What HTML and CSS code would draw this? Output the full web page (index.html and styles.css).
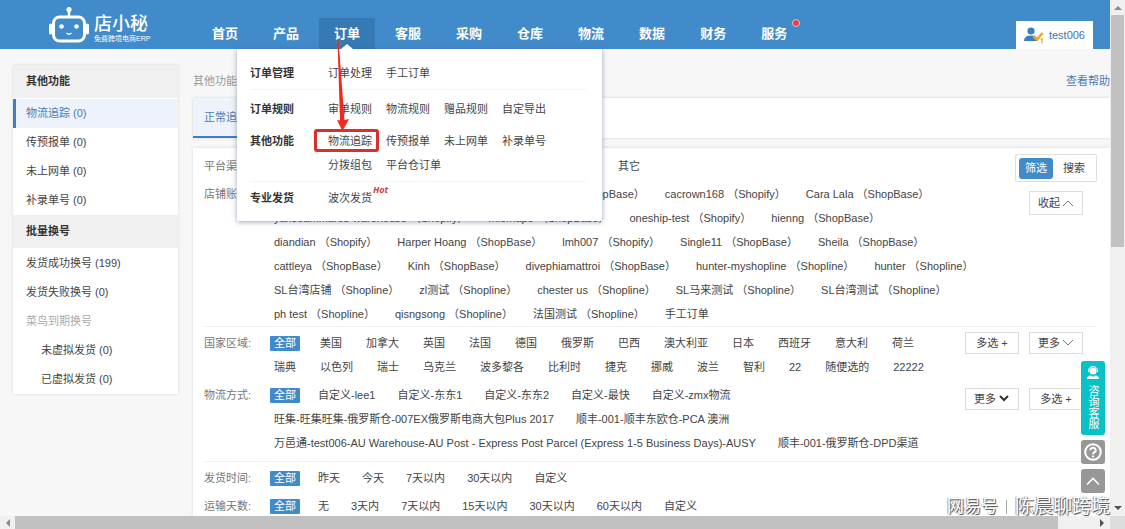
FILE: index.html
```html
<!DOCTYPE html>
<html lang="zh-CN">
<head>
<meta charset="utf-8">
<title>店小秘 - 物流追踪</title>
<link rel="stylesheet" href="styles.css">
</head>
<body>
<div class="page">
  <div class="view">
    <header class="header">
      <a class="logo" href="#">
        <svg class="logo-icon" viewBox="0 0 40 37" fill="none" stroke="#fff">
          <rect x="4.500" y="11" width="31" height="24" rx="6" stroke-width="3"/>
          <path d="M20 11V5" stroke-width="2.500"/>
          <circle cx="20" cy="3.500" r="2.600" fill="#fff" stroke="none"/>
          <path d="M1.500 19v8M38.500 19v8" stroke-width="3" stroke-linecap="round"/>
          <circle cx="12.500" cy="20.500" r="2.300" fill="#fff" stroke="none"/>
          <circle cx="27.500" cy="20.500" r="2.300" fill="#fff" stroke="none"/>
          <path d="M17.500 27q2.500 2.400 5 0" stroke-width="1.400"/>
        </svg>
        <span class="logo-text">
          <span class="logo-name">店小秘</span>
          <span class="logo-sub">免费跨境电商ERP</span>
        </span>
      </a>
      <nav class="nav">
        <div class="nav-item"><a href="#">首页</a></div>
        <div class="nav-item"><a href="#">产品</a></div>
        <div class="nav-item nav-item--active"><a href="#">订单</a>
          <div class="menu">
            <div class="menu-row">
              <strong>订单管理</strong>
              <div class="menu-links"><a href="#">订单处理</a><a href="#">手工订单</a></div>
            </div>
            <div class="menu-row menu-row--line">
              <strong>订单规则</strong>
              <div class="menu-links"><a href="#">审单规则</a><a href="#">物流规则</a><a href="#">赠品规则</a><a href="#">自定导出</a></div>
            </div>
            <div class="menu-row">
              <strong>其他功能</strong>
              <div class="menu-links"><a class="marked" href="#">物流追踪</a><a href="#">传预报单</a><a href="#">未上网单</a><a href="#">补录单号</a><a href="#">分拨组包</a><a href="#">平台仓订单</a></div>
            </div>
            <div class="menu-row menu-row--line">
              <strong>专业发货</strong>
              <div class="menu-links"><a class="hot-link" href="#">波次发货<em class="hot">Hot</em></a></div>
            </div>
            <svg class="arrow" viewBox="0 0 16 90"><path d="M5.500 0L6.500 0L12.500 80L17 79L10.500 91L5 80L8 80.500Z" fill="#f0281e"/></svg>
          </div>
        </div>
        <div class="nav-item"><a href="#">客服</a></div>
        <div class="nav-item"><a href="#">采购</a></div>
        <div class="nav-item"><a href="#">仓库</a></div>
        <div class="nav-item"><a href="#">物流</a></div>
        <div class="nav-item"><a href="#">数据</a></div>
        <div class="nav-item"><a href="#">财务</a></div>
        <div class="nav-item nav-item--dot"><a href="#">服务</a></div>
      </nav>
      <a class="user" href="#">
        <svg class="user-icon" viewBox="0 0 20 17">
          <circle cx="7" cy="4" r="3.600" fill="#3a7fc0"/>
          <path d="M0 14q0-5.500 7-5.500t7 5.500z" fill="#3a7fc0"/>
          <path d="M9.500 9l3.500 3.500L18.500 6" fill="none" stroke="#eda829" stroke-width="2.600"/>
          <path d="M16.500 12.500l1.500-1v5" fill="none" stroke="#eda829" stroke-width="1.200"/>
        </svg>
        <span>test006</span>
      </a>
    </header>

    <div class="body">
      <aside class="sidebar">
        <h2>其他功能</h2>
        <ul>
          <li><a class="active" href="#">物流追踪 (0)</a></li>
          <li><a href="#">传预报单 (0)</a></li>
          <li><a href="#">未上网单 (0)</a></li>
          <li><a href="#">补录单号 (0)</a></li>
        </ul>
        <h2>批量换号</h2>
        <ul>
          <li><a href="#">发货成功换号 (199)</a></li>
          <li><a href="#">发货失败换号 (0)</a></li>
          <li><span class="muted">菜鸟到期换号</span></li>
          <li><a class="sub" href="#">未虚拟发货 (0)</a></li>
          <li><a class="sub" href="#">已虚拟发货 (0)</a></li>
        </ul>
      </aside>

      <main class="main">
        <div class="crumb"><span>其他功能</span><a href="#">查看帮助</a></div>
        <div class="tabs"><a class="tab" href="#">正常追踪</a></div>
        <section class="panel">
          <div class="group">
            <div class="label">平台渠道:</div>
            <div class="options">
              <div class="line line--platform"><a href="#">其它</a></div>
            </div>
            <div class="switch"><button class="primary">筛选</button><button>搜索</button></div>
          </div>
          <div class="group group--shops">
            <div class="label">店铺账号:</div>
            <div class="options">
              <div class="line line--shop"><a href="#">（ShopBase）</a><a href="#">cacrown168 （Shopify）</a><a href="#">Cara Lala （ShopBase）</a></div>
              <div class="line"><a href="#">yanseammares-warehouse （Shopify）</a><a href="#">miemape （ShopBase）</a><a href="#">oneship-test （Shopify）</a><a href="#">hienng （ShopBase）</a></div>
              <div class="line"><a href="#">diandian （Shopify）</a><a href="#">Harper Hoang （ShopBase）</a><a href="#">lmh007 （Shopify）</a><a href="#">Single11 （ShopBase）</a><a href="#">Sheila （ShopBase）</a></div>
              <div class="line"><a href="#">cattleya （ShopBase）</a><a href="#">Kinh （ShopBase）</a><a href="#">divephiamattroi （ShopBase）</a><a href="#">hunter-myshopline （Shopline）</a><a href="#">hunter （Shopline）</a></div>
              <div class="line"><a href="#">SL台湾店铺 （Shopline）</a><a href="#">zl测试 （Shopline）</a><a href="#">chester us （Shopline）</a><a href="#">SL马来测试 （Shopline）</a><a href="#">SL台湾测试 （Shopline）</a></div>
              <div class="line"><a href="#">ph test （Shopline）</a><a href="#">qisngsong （Shopline）</a><a href="#">法国测试 （Shopline）</a><a href="#">手工订单</a></div>
            </div>
            <div class="tools tools--shops"><button>收起<svg viewBox="0 0 12 8"><path d="M1 7l5-5 5 5"/></svg></button></div>
          </div>
          <div class="group group--line">
            <div class="label">国家区域:</div>
            <div class="options options--region">
              <div class="line"><a class="on" href="#">全部</a><a href="#">美国</a><a href="#">加拿大</a><a href="#">英国</a><a href="#">法国</a><a href="#">德国</a><a href="#">俄罗斯</a><a href="#">巴西</a><a href="#">澳大利亚</a><a href="#">日本</a><a href="#">西班牙</a><a href="#">意大利</a><a href="#">荷兰</a></div>
              <div class="line"><a href="#">瑞典</a><a href="#">以色列</a><a href="#">瑞士</a><a href="#">乌克兰</a><a href="#">波多黎各</a><a href="#">比利时</a><a href="#">捷克</a><a href="#">挪威</a><a href="#">波兰</a><a href="#">智利</a><a href="#">22</a><a href="#">随便选的</a><a href="#">22222</a></div>
            </div>
            <div class="tools"><button>多选 +</button><button>更多<svg viewBox="0 0 12 8"><path d="M1 1l5 5 5-5"/></svg></button></div>
          </div>
          <div class="group group--logistics">
            <div class="label">物流方式:</div>
            <div class="options">
              <div class="line"><a class="on" href="#">全部</a><a href="#">自定义-lee1</a><a href="#">自定义-东东1</a><a href="#">自定义-东东2</a><a href="#">自定义-最快</a><a href="#">自定义-zmx物流</a></div>
              <div class="line"><a href="#">旺集-旺集旺集-俄罗斯仓-007EX俄罗斯电商大包Plus 2017</a><a href="#">顺丰-001-顺丰东欧仓-PCA 澳洲</a></div>
              <div class="line"><a href="#">万邑通-test006-AU Warehouse-AU Post - Express Post Parcel (Express 1-5 Business Days)-AUSY</a><a href="#">顺丰-001-俄罗斯仓-DPD渠道</a></div>
            </div>
            <div class="tools tools--logistics"><button>更多<svg class="bold" viewBox="0 0 12 8"><path d="M2 1l4 4 4-4"/></svg></button><button>多选 +</button></div>
          </div>
          <div class="group group--line">
            <div class="label">发货时间:</div>
            <div class="options">
              <div class="line"><a class="on" href="#">全部</a><a href="#">昨天</a><a href="#">今天</a><a href="#">7天以内</a><a href="#">30天以内</a><a href="#">自定义</a></div>
            </div>
          </div>
          <div class="group">
            <div class="label">运输天数:</div>
            <div class="options">
              <div class="line"><a class="on" href="#">全部</a><a href="#">无</a><a href="#">3天内</a><a href="#">7天以内</a><a href="#">15天以内</a><a href="#">30天以内</a><a href="#">60天以内</a><a href="#">自定义</a></div>
            </div>
          </div>
        </section>
      </main>
    </div>

    <div class="float">
      <button class="service">
        <svg viewBox="0 0 14 14" fill="#fff"><circle cx="7" cy="5" r="3.600"/><path d="M1 13q0-3.500 4-3.500l2 1.500 2-1.500q4 0 4 3.500z"/><path d="M2.500 6V4.500a4.500 4 0 0 1 9 0V6" fill="none" stroke="#fff"/></svg>
        <span>咨询客服</span>
      </button>
      <button class="square" aria-label="帮助">
        <svg viewBox="0 0 20 20" fill="none" stroke="#fff" stroke-width="2"><circle cx="10" cy="10" r="7.800"/><path d="M7.300 8.200a2.700 2.500 0 1 1 4.300 2q-1.600 1-1.600 2"/><path d="M10 13.500v1.800"/></svg>
      </button>
      <button class="square" aria-label="返回顶部">
        <svg viewBox="0 0 20 20" fill="none" stroke="#fff" stroke-width="1.600"><path d="M4 13.500l6-6 6 6"/></svg>
      </button>
    </div>
    <div class="watermark"><span>网易号</span><i></i><span class="author">陈晨聊跨境</span></div>
  </div>

  <div class="vbar">
    <svg viewBox="0 0 8 4" fill="#8a8a8a"><path d="M0 4l4-4 4 4z"/></svg>
    <div class="vthumb"></div>
    <svg viewBox="0 0 8 4" fill="#505050"><path d="M0 0l4 4 4-4z"/></svg>
  </div>
  <div class="hbar">
    <svg viewBox="0 0 4 8" fill="#8a8a8a"><path d="M4 0L0 4l4 4z"/></svg>
    <div class="hthumb"></div>
    <svg viewBox="0 0 4 8" fill="#505050"><path d="M0 0l4 4-4 4z"/></svg>
  </div>
  <div class="corner"></div>
</div>
</body>
</html>
```

FILE: styles.css
```css
*, *::before, *::after { box-sizing: border-box; }

body {
  margin: 0;
  background: #f7f7f7;
  color: #444;
  font: 11px/24px "Liberation Sans", "Noto Sans CJK SC", sans-serif;
}

a { color: inherit; text-decoration: none; }
ul { margin: 0; padding: 0; list-style: none; }
button { margin: 0; padding: 0; border: 0; background: #fff; color: #444; font: inherit; }

.page {
  display: grid;
  grid-template: minmax(0, 1fr) 13px / minmax(0, 1fr) 15px;
  height: 100vh;
}

.view { position: relative; height: calc(100vh - 13px); }

/* header */
.header {
  position: relative;
  z-index: 2;
  display: flex;
  align-items: flex-end;
  height: 49px;
  background: #428bca;
}

.logo { display: flex; align-items: flex-end; gap: 5px; width: 198px; padding: 0 0 6px 49px; color: #fff; }
.logo-icon { width: 40px; height: 37px; }
.logo-text { display: flex; flex-direction: column; }
.logo-name { font-size: 18px; font-weight: 500; line-height: 20px; }
.logo-sub { font-size: 7px; line-height: 9px; white-space: nowrap; }

.nav { display: flex; flex: 1; gap: 5px; margin-left: -1px; }
.nav-item { position: relative; height: 31px; padding: 0 15px; color: #fff; font-size: 13px; font-weight: 700; line-height: 31px; white-space: nowrap; }
.nav-item--active { background: #357ab5; }
.nav-item--active::after {
  content: "";
  position: absolute;
  bottom: 0;
  left: 22px;
  border: 6px solid transparent;
  border-top: 0;
  border-bottom: 5px solid #fff;
}
.nav-item--dot::after {
  content: "";
  position: absolute;
  top: 1px;
  right: 2px;
  width: 8px;
  height: 8px;
  border: 1px solid #f3b6b6;
  border-radius: 50%;
  background: #d9444a;
}

.user { display: flex; align-items: center; gap: 5px; height: 28px; margin-right: 17px; padding: 0 8px; background: #fff; color: #3f74ad; }
.user-icon { width: 20px; height: 17px; }

/* drop-down under the active entry */
.menu {
  position: absolute;
  top: 31px;
  left: -82px;
  width: 365px;
  padding: 8px 16px 7px 13px;
  background: #fff;
  box-shadow: 0 1px 5px rgba(60, 80, 120, .5);
  color: #444;
  font-size: 11px;
  font-weight: 400;
  line-height: 24px;
}
.menu-row { display: flex; padding: 4px 0; }
.menu-row strong { flex: none; width: 78px; color: #333; }
.menu-row--line { border-top: 1px solid #f4f4f4; }
.menu-row:nth-child(2) { padding-top: 7px; }
.menu-links { display: grid; grid-template-columns: repeat(4, 58px); }
.marked { position: relative; }
.marked::before {
  content: "";
  position: absolute;
  top: 0;
  left: -14px;
  width: 65px;
  height: 23px;
  border: 3px solid #d8302a;
  border-radius: 3px;
}
.hot-link { position: relative; }
.hot { position: absolute; top: -4px; left: 45px; color: #cf3f3f; font: italic 700 9px/16px "Open Sans", sans-serif; }
.arrow { position: absolute; top: -9px; left: 95px; width: 16px; height: 90px; overflow: visible; }

/* body */
.body { display: flex; gap: 15px; height: calc(100% - 49px); padding: 16px 0 0 13px; overflow: hidden; }

.sidebar { flex: none; align-self: flex-start; width: 165px; background: #fff; box-shadow: 0 0 3px rgba(0, 0, 0, .12); }
.sidebar h2 { margin: 0; padding-left: 13px; background: #f0f0f0; color: #333; font-size: 11px; line-height: 33px; }
.sidebar ul { padding-top: 1px; line-height: 29px; }
.sidebar li > * { display: block; padding-left: 13px; }
.sidebar .active { padding-left: 10px; border-left: 3px solid #3f7fbd; background: #edf2fb; color: #4a7cb3; }
.sidebar .muted { color: #aaa; }
.sidebar .sub { padding-left: 28px; }

.main { flex: 1; min-width: 0; }
.crumb { display: flex; justify-content: space-between; color: #999; line-height: 33px; }
.crumb a { color: #4a7cb3; }
.tabs { display: flex; height: 40px; background: #fff; box-shadow: 0 0 3px rgba(0, 0, 0, .14); }
.tab { padding: 0 11px; border-bottom: 2px solid #3f7fbd; background: #edf2fb; color: #4a7cb3; line-height: 38px; }

.panel { margin-top: 10px; padding: 6px 13px 40px 11px; background: #fff; box-shadow: 0 0 3px rgba(0, 0, 0, .14); }
.group { display: flex; align-items: flex-start; padding-bottom: 4px; }
.group--shops { padding-bottom: 0; }
.group--logistics { padding-bottom: 6px; }
.group--line { padding-top: 4px; border-top: 1px solid #f0f0f0; }
.label { flex: none; width: 66px; color: #777; }
.options { flex: 1; min-width: 0; }
.line { display: flex; align-items: center; gap: 14px; height: 24px; white-space: nowrap; }
.line a { padding: 0 4px; line-height: 15px; }
.line .on { border-radius: 1px; background: #428bca; color: #fff; }
.options--region .line { gap: 16px; }
.group--shops .line { gap: 12px; }
.line--platform { padding-left: 344px; }
.line--shop { padding-left: 298px; }

.switch { display: flex; flex: none; align-items: center; gap: 10px; width: 82px; height: 28px; margin-bottom: -4px; padding: 0 3px; border: 1px solid #ddd; border-radius: 2px; }
.switch .primary { width: 34px; border-radius: 3px; background: #428bca; color: #fff; }
.switch button { line-height: 21px; }

.tools { display: flex; flex: none; gap: 10px; padding: 1px 14px 0 0; }
.tools--shops { padding-top: 9px; }
.tools--logistics { padding-top: 5px; }
.tools button { display: flex; align-items: center; justify-content: center; gap: 2px; width: 54px; height: 22px; border: 1px solid #ddd; }
.tools--shops button { height: 24px; }
.tools svg { width: 12px; height: 8px; fill: none; stroke: #777; stroke-width: 1; }
.tools .bold { stroke: #333; stroke-width: 2; }

/* floating help */
.float { position: absolute; right: 5px; bottom: 23px; z-index: 3; display: flex; flex-direction: column; gap: 5px; width: 24px; }
.service { display: flex; flex-direction: column; align-items: center; gap: 5px; height: 74px; padding-top: 5px; border-radius: 3px; background: #09c1c7; color: #fff; line-height: 14px; }
.service svg { width: 14px; height: 14px; }
.service span { writing-mode: vertical-rl; }
.square { display: flex; align-items: center; justify-content: center; height: 24px; border-radius: 3px; background: #979797; }
.square svg { width: 20px; height: 20px; }

.watermark {
  position: absolute;
  right: 0;
  bottom: -3px;
  z-index: 4;
  display: flex;
  align-items: center;
  gap: 8px;
  color: #fff;
  font-size: 17px;
  text-shadow: 1px 1px 1px #444, -1px 0 1px #999;
  white-space: nowrap;
}
.watermark i { width: 1px; height: 14px; background: #aaa; }
.watermark .author { font-size: 19px; }

/* scroll bars */
.vbar { display: flex; flex-direction: column; align-items: center; padding: 6px 1px; background: #f0f0f0; }
.vbar svg { width: 8px; height: 4px; }
.vthumb { width: 13px; height: 46%; margin: 5px 0 auto; background: #c1c1c1; }
.hbar { display: flex; align-items: center; padding: 0 6px; background: #f0f0f0; }
.hbar svg { width: 4px; height: 8px; }
.hthumb { width: 95%; height: 13px; margin: 0 auto 0 5px; background: #c1c1c1; }
.corner { background: #dcdcdc; }
```
